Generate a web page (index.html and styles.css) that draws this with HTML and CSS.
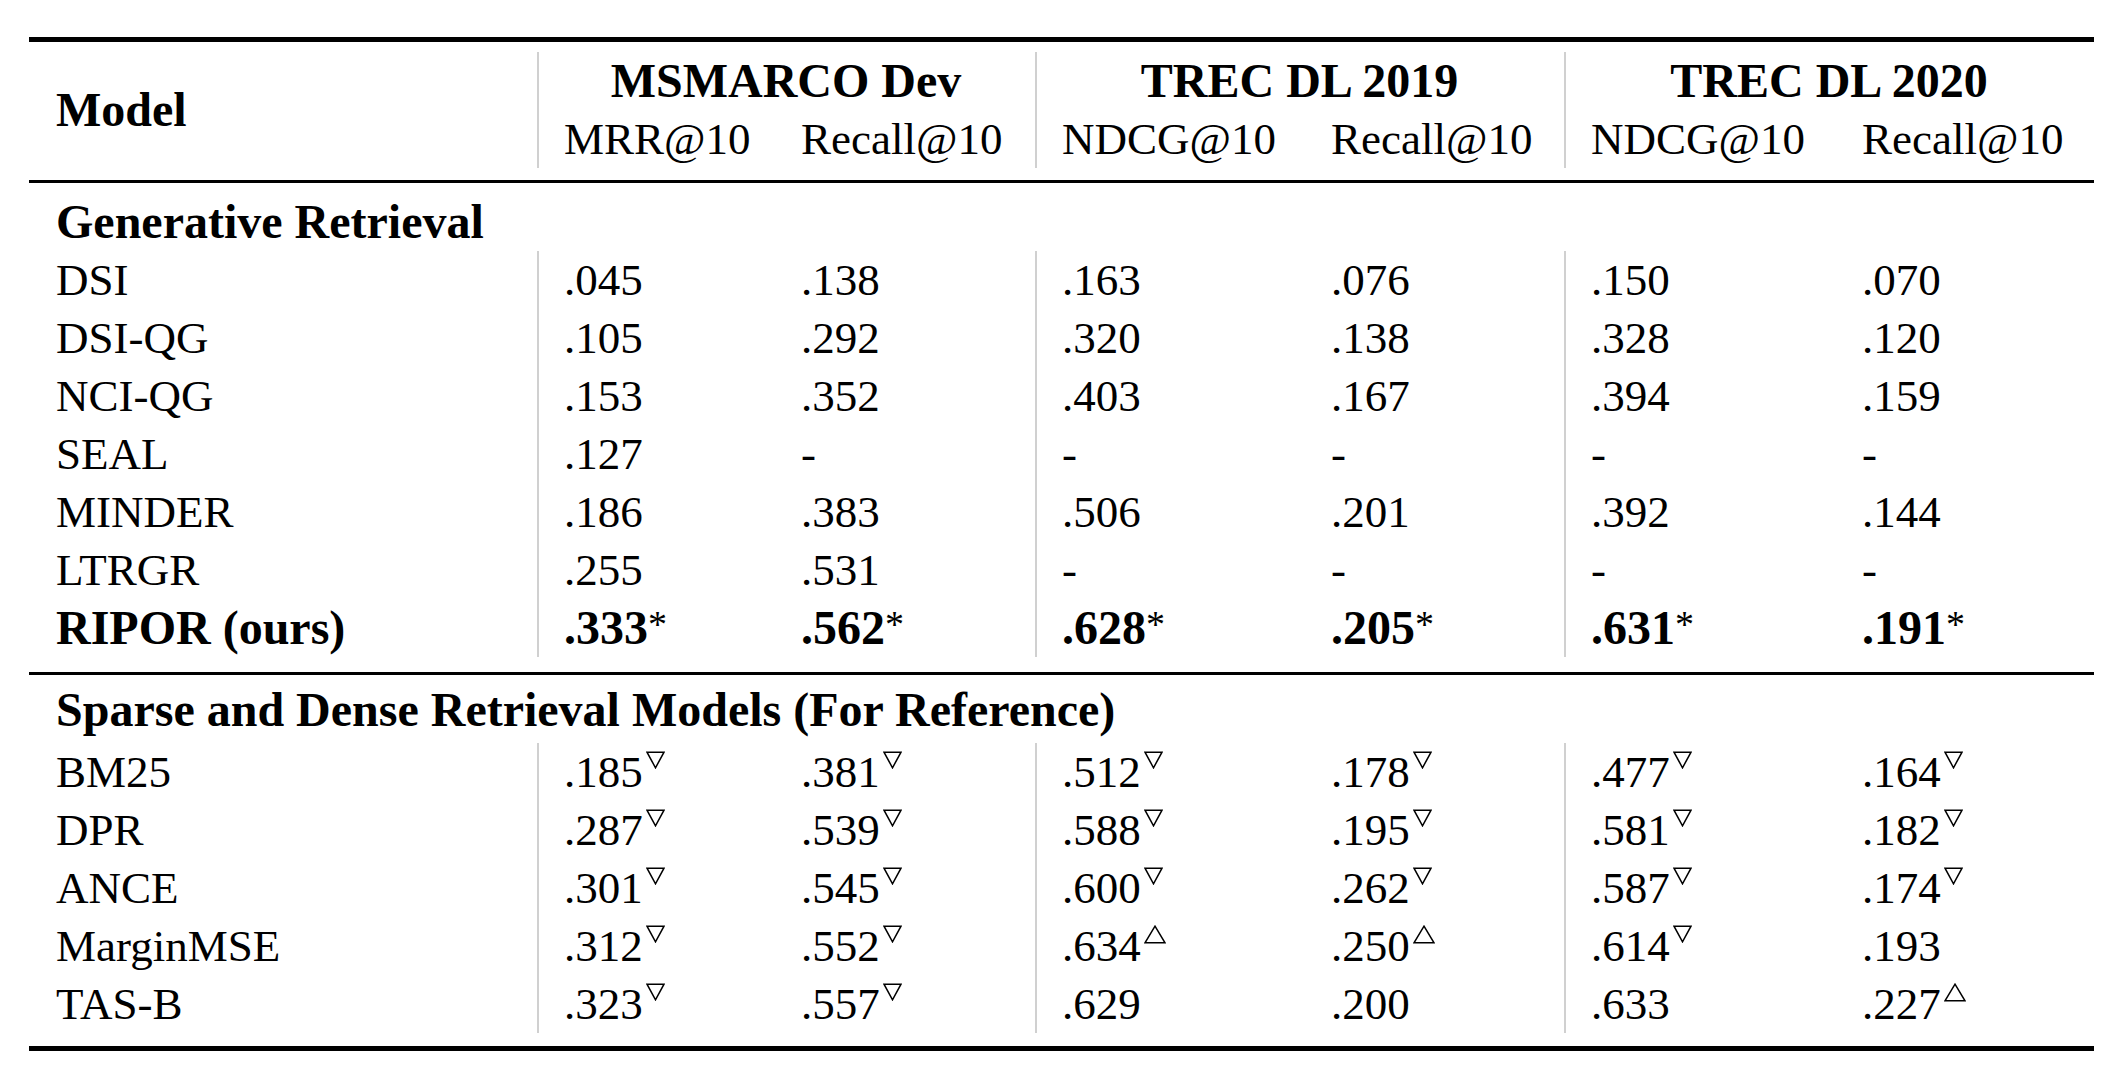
FILE: index.html
```html
<!DOCTYPE html>
<html>
<head>
<meta charset="utf-8">
<link rel="stylesheet" href="styles.css">
</head>
<body>
<div class="table">
  <div class="rule rule-thick"></div>
  <div class="thead grid">
    <div class="model">Model</div>
    <div class="gtitle sep">MSMARCO Dev</div>
    <div class="gtitle sep">TREC DL 2019</div>
    <div class="gtitle sep">TREC DL 2020</div>
    <div class="mh sep">MRR@10</div>
    <div class="mh">Recall@10</div>
    <div class="mh sep">NDCG@10</div>
    <div class="mh">Recall@10</div>
    <div class="mh sep">NDCG@10</div>
    <div class="mh">Recall@10</div>
  </div>
  <div class="rule rule-mid"></div>

  <div class="section">
    <div class="sec-title">Generative Retrieval</div>
    <div class="grid body">
      <div class="c">DSI</div><div class="c sep">.045</div><div class="c">.138</div><div class="c sep">.163</div><div class="c">.076</div><div class="c sep">.150</div><div class="c">.070</div>
      <div class="c">DSI-QG</div><div class="c sep">.105</div><div class="c">.292</div><div class="c sep">.320</div><div class="c">.138</div><div class="c sep">.328</div><div class="c">.120</div>
      <div class="c">NCI-QG</div><div class="c sep">.153</div><div class="c">.352</div><div class="c sep">.403</div><div class="c">.167</div><div class="c sep">.394</div><div class="c">.159</div>
      <div class="c">SEAL</div><div class="c sep">.127</div><div class="c">-</div><div class="c sep">-</div><div class="c">-</div><div class="c sep">-</div><div class="c">-</div>
      <div class="c">MINDER</div><div class="c sep">.186</div><div class="c">.383</div><div class="c sep">.506</div><div class="c">.201</div><div class="c sep">.392</div><div class="c">.144</div>
      <div class="c">LTRGR</div><div class="c sep">.255</div><div class="c">.531</div><div class="c sep">-</div><div class="c">-</div><div class="c sep">-</div><div class="c">-</div>
      <div class="c b">RIPOR (ours)</div><div class="c b sep">.333<span class="star">*</span></div><div class="c b">.562<span class="star">*</span></div><div class="c b sep">.628<span class="star">*</span></div><div class="c b">.205<span class="star">*</span></div><div class="c b sep">.631<span class="star">*</span></div><div class="c b">.191<span class="star">*</span></div>
    </div>
  </div>
  <div class="rule rule-mid rule-sec"></div>

  <div class="section section2">
    <div class="sec-title">Sparse and Dense Retrieval Models (For Reference)</div>
    <div class="grid body">
      <div class="c">BM25</div>
      <div class="c sep">.185<svg class="tri dn" viewBox="0 0 19 18"><path d="M1 1.2H18L9.5 16.8Z"/></svg></div>
      <div class="c">.381<svg class="tri dn" viewBox="0 0 19 18"><path d="M1 1.2H18L9.5 16.8Z"/></svg></div>
      <div class="c sep">.512<svg class="tri dn" viewBox="0 0 19 18"><path d="M1 1.2H18L9.5 16.8Z"/></svg></div>
      <div class="c">.178<svg class="tri dn" viewBox="0 0 19 18"><path d="M1 1.2H18L9.5 16.8Z"/></svg></div>
      <div class="c sep">.477<svg class="tri dn" viewBox="0 0 19 18"><path d="M1 1.2H18L9.5 16.8Z"/></svg></div>
      <div class="c">.164<svg class="tri dn" viewBox="0 0 19 18"><path d="M1 1.2H18L9.5 16.8Z"/></svg></div>

      <div class="c">DPR</div>
      <div class="c sep">.287<svg class="tri dn" viewBox="0 0 19 18"><path d="M1 1.2H18L9.5 16.8Z"/></svg></div>
      <div class="c">.539<svg class="tri dn" viewBox="0 0 19 18"><path d="M1 1.2H18L9.5 16.8Z"/></svg></div>
      <div class="c sep">.588<svg class="tri dn" viewBox="0 0 19 18"><path d="M1 1.2H18L9.5 16.8Z"/></svg></div>
      <div class="c">.195<svg class="tri dn" viewBox="0 0 19 18"><path d="M1 1.2H18L9.5 16.8Z"/></svg></div>
      <div class="c sep">.581<svg class="tri dn" viewBox="0 0 19 18"><path d="M1 1.2H18L9.5 16.8Z"/></svg></div>
      <div class="c">.182<svg class="tri dn" viewBox="0 0 19 18"><path d="M1 1.2H18L9.5 16.8Z"/></svg></div>

      <div class="c">ANCE</div>
      <div class="c sep">.301<svg class="tri dn" viewBox="0 0 19 18"><path d="M1 1.2H18L9.5 16.8Z"/></svg></div>
      <div class="c">.545<svg class="tri dn" viewBox="0 0 19 18"><path d="M1 1.2H18L9.5 16.8Z"/></svg></div>
      <div class="c sep">.600<svg class="tri dn" viewBox="0 0 19 18"><path d="M1 1.2H18L9.5 16.8Z"/></svg></div>
      <div class="c">.262<svg class="tri dn" viewBox="0 0 19 18"><path d="M1 1.2H18L9.5 16.8Z"/></svg></div>
      <div class="c sep">.587<svg class="tri dn" viewBox="0 0 19 18"><path d="M1 1.2H18L9.5 16.8Z"/></svg></div>
      <div class="c">.174<svg class="tri dn" viewBox="0 0 19 18"><path d="M1 1.2H18L9.5 16.8Z"/></svg></div>

      <div class="c">MarginMSE</div>
      <div class="c sep">.312<svg class="tri dn" viewBox="0 0 19 18"><path d="M1 1.2H18L9.5 16.8Z"/></svg></div>
      <div class="c">.552<svg class="tri dn" viewBox="0 0 19 18"><path d="M1 1.2H18L9.5 16.8Z"/></svg></div>
      <div class="c sep">.634<svg class="tri up" viewBox="0 0 22 19"><path d="M11 1.2L21 17.8H1Z"/></svg></div>
      <div class="c">.250<svg class="tri up" viewBox="0 0 22 19"><path d="M11 1.2L21 17.8H1Z"/></svg></div>
      <div class="c sep">.614<svg class="tri dn" viewBox="0 0 19 18"><path d="M1 1.2H18L9.5 16.8Z"/></svg></div>
      <div class="c">.193</div>

      <div class="c">TAS-B</div>
      <div class="c sep">.323<svg class="tri dn" viewBox="0 0 19 18"><path d="M1 1.2H18L9.5 16.8Z"/></svg></div>
      <div class="c">.557<svg class="tri dn" viewBox="0 0 19 18"><path d="M1 1.2H18L9.5 16.8Z"/></svg></div>
      <div class="c sep">.629</div>
      <div class="c">.200</div>
      <div class="c sep">.633</div>
      <div class="c">.227<svg class="tri up" viewBox="0 0 22 19"><path d="M11 1.2L21 17.8H1Z"/></svg></div>
    </div>
  </div>
  <div class="rule rule-thick rule-end"></div>
</div>
</body>
</html>
```

FILE: styles.css
```css
html, body {
  margin: 0;
  padding: 0;
  background: #ffffff;
}

body {
  font-family: "Liberation Serif", "Times New Roman", serif;
  color: #000000;
  font-size: 45px;
}

.table {
  width: 2065px;
  margin: 37px 0 0 29px;
}

.rule {
  background: #000000;
}

.rule-thick {
  height: 5px;
}

.rule-mid {
  height: 3px;
}

.rule-sec {
  margin-top: 15px;
}

.rule-end {
  margin-top: 13px;
}

.grid {
  display: grid;
  grid-template-columns: 508px 237px 261px 269px 260px 271px 259px;
}

.thead {
  grid-template-rows: 58px 58px;
  padding: 10px 0 12px 0;
  line-height: 58px;
}

.model {
  grid-row: 1 / span 2;
  display: flex;
  align-items: center;
  padding-left: 27px;
  font-weight: bold;
  font-size: 48px;
}

.gtitle {
  grid-column: span 2;
  text-align: center;
  font-weight: bold;
  font-size: 48px;
  white-space: nowrap;
}

.mh {
  padding-left: 27px;
  white-space: nowrap;
}

.sep {
  border-left: 2px solid #d0d0d0;
}

.mh.sep,
.c.sep {
  padding-left: 25px;
}

.gtitle.sep {
  padding-right: 2px;
}

.section {
  padding-top: 10px;
}

.section2 {
  padding-top: 6px;
}

.sec-title {
  font-weight: bold;
  font-size: 48px;
  line-height: 58px;
  padding-left: 27px;
  white-space: nowrap;
}

.section2 .sec-title {
  padding-bottom: 4px;
}

.body {
  grid-auto-rows: 58px;
  line-height: 58px;
}

.c {
  padding-left: 27px;
  white-space: nowrap;
}

.c.b {
  font-weight: bold;
  font-size: 48px;
}

.star {
  font-weight: normal;
  font-size: 38px;
  line-height: 0;
  vertical-align: 7px;
}

.tri {
  fill: none;
  stroke: #000000;
  stroke-width: 1.5;
  stroke-linejoin: miter;
}

.tri.dn {
  width: 19px;
  height: 18px;
  vertical-align: 18px;
  margin-left: 3px;
}

.tri.up {
  width: 22px;
  height: 19px;
  vertical-align: 17px;
  margin-left: 3px;
}
```
